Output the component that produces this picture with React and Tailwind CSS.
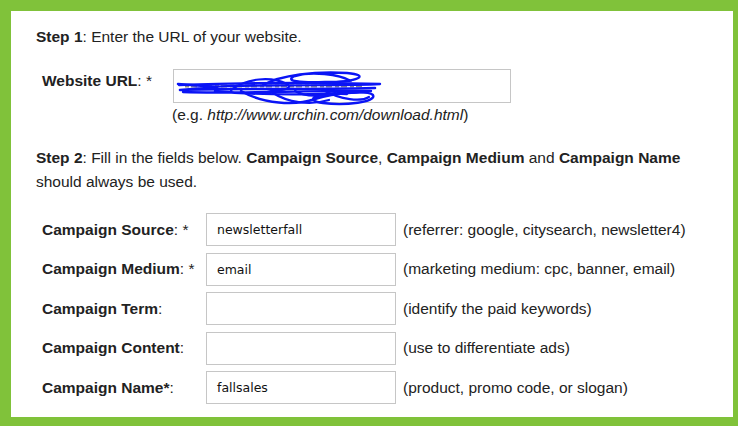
import React from "react";

const font = { fontFamily: '"Liberation Sans", Arial, sans-serif' };

const rows = [
  { label: "Campaign Source", req: ": *", value: "newsletterfall", hint: "(referrer: google, citysearch, newsletter4)" },
  { label: "Campaign Medium", req: ": *", value: "email", hint: "(marketing medium: cpc, banner, email)" },
  { label: "Campaign Term", req: ":", value: "", hint: "(identify the paid keywords)" },
  { label: "Campaign Content", req: ":", value: "", hint: "(use to differentiate ads)" },
  { label: "Campaign Name", req: "*:", value: "fallsales", hint: "(product, promo code, or slogan)" },
];

function Scribble() {
  const blue = "#0a14f5";
  return (
    <svg className="absolute left-0 top-0 overflow-visible" width="210" height="36" viewBox="0 0 210 36" fill="none">
      <path d="M10 15 L190 15" stroke="#8a8a8a" strokeWidth="3" strokeDasharray="4 2 6 3" />
      <g stroke={blue} strokeLinecap="round" strokeLinejoin="round" fill="none">
        <path d="M3 13 L42 16 L5 19 C60 17 130 19 200 17" strokeWidth="2.6" />
        <path d="M4 14 C60 12 130 11 205 13 C170 15 100 13 30 16" strokeWidth="2.4" />
        <path d="M8 21 C60 23 140 19 196 20 C160 24 90 25 40 20" strokeWidth="2.4" />
        <path d="M88 14 C106 4 140 0 172 2 C196 4 184 11 150 11 C126 12 108 10 120 5 C136 0 164 3 176 10" strokeWidth="2.4" />
        <path d="M56 19 C72 7 96 5 112 13 C120 17 104 22 92 18" strokeWidth="2.2" />
        <path d="M66 20 C88 33 120 35 140 28 C160 22 192 19 198 24 C202 31 170 35 148 32 C128 29 140 21 172 23" strokeWidth="2.4" />
        <path d="M98 22 C112 31 134 35 154 29 M148 19 C166 29 186 31 194 26 M120 20 C130 26 150 26 160 22" strokeWidth="2.2" />
      </g>
    </svg>
  );
}

export default function App() {
  return (
    <div className="w-[738px] h-[426px] bg-[#80c23a] pl-[11px] pt-[11px] pr-[5px] pb-[9px] text-[#222]" style={font}>
      <div className="bg-white w-full h-full pl-[25px] pt-[16px]">
        {/* Step 1 */}
        <p className="text-[15.5px] leading-[19px]">
          <b>Step 1</b>: Enter the URL of your website.
        </p>

        <div className="flex items-start mt-[23px] ml-[6px]">
          <div className="w-[131px] pt-[2px] text-[15.5px] leading-[19px]">
            <b>Website URL</b>: *
          </div>
          <div>
            <div className="relative w-[338px] h-[34px] border border-[#c6c6c6]">
              <div className="absolute left-[1px] top-[1px]">
                <Scribble />
              </div>
            </div>
            <p className="text-[15.5px] leading-[19px] mt-[2px] -ml-[1px]">
              (e.g. <i>http://www.urchin.com/download.html</i>)
            </p>
          </div>
        </div>

        {/* Step 2 */}
        <p className="text-[15.5px] leading-[24px] mt-[22px] w-[680px]">
          <b>Step 2</b>: Fill in the fields below. <b>Campaign Source</b>, <b>Campaign Medium</b> and{" "}
          <b>Campaign Name</b> should always be used.
        </p>

        <div className="flex flex-col gap-[6.5px] mt-[19px] ml-[6px]">
          {rows.map((r) => (
            <div key={r.label} className="flex items-center">
              <div className="w-[164px] text-[15.5px]">
                <b>{r.label}</b>
                {r.label === "Campaign Name" ? <b>*</b> : null}
                {r.label === "Campaign Name" ? ":" : r.req}
              </div>
              <div
                className="w-[190px] h-[33px] border border-[#c6c6c6] flex items-center pl-[10px] pt-[2px] text-[12.5px] text-[#111]"
                style={{ fontFamily: '"DejaVu Sans", sans-serif' }}
              >
                {r.value}
              </div>
              <span className="ml-[7px] text-[15.5px]">{r.hint}</span>
            </div>
          ))}
        </div>
      </div>
    </div>
  );
}
